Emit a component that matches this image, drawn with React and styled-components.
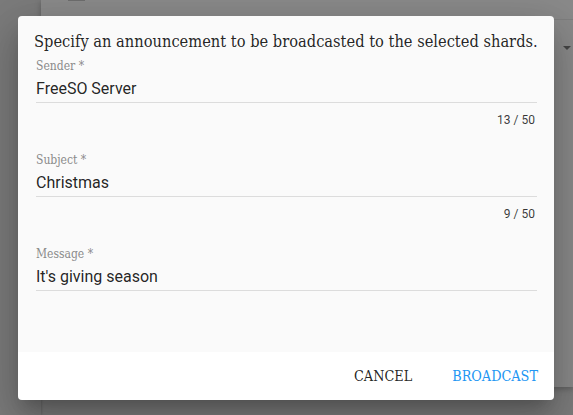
import React from "react";
import styled, { createGlobalStyle } from "styled-components";

const slab = `"DejaVu Serif Condensed", "DejaVu Serif", serif`;
const sans = `Roboto, "Liberation Sans", sans-serif`;

const GlobalStyle = createGlobalStyle`
  html, body { margin: 0; padding: 0; }
  body { background: #7c7c7c; font-family: ${sans}; }
`;

const Page = styled.div`
  position: relative;
  width: 573px;
  height: 415px;
  overflow: hidden;
  display: flex;
  background: #7c7c7c;
`;

const SideStrip = styled.div`
  width: 41px;
  flex: none;
  background: #7b7b7b;
  box-shadow: 1px 0 2px rgba(0, 0, 0, 0.15);
`;

const BackCard = styled.div`
  flex: 1;
  height: 387px;
  background: #8a8a8a;
  box-shadow: 0 2px 6px rgba(0, 0, 0, 0.25);
  display: flex;
  flex-direction: column;
`;

const BackTopRow = styled.div`
  height: 19px;
  border-bottom: 1px solid #7f7f7f;
  display: flex;
  align-items: flex-end;
  padding-left: 27px;
`;

const BackIcon = styled.div`
  width: 17px;
  height: 3px;
  margin-top: -2px;
  align-self: flex-start;
  background: #6e6e6e;
`;

const BackSelectRow = styled.div`
  display: flex;
  justify-content: flex-end;
  padding: 26px 2px 0 0;
`;

const Arrow = styled.div`
  width: 0;
  height: 0;
  border-left: 4px solid transparent;
  border-right: 4px solid transparent;
  border-top: 4px solid #454545;
`;

const Dialog = styled.div`
  position: absolute;
  left: 18px;
  top: 16px;
  width: 536px;
  height: 384px;
  border-radius: 4px;
  overflow: hidden;
  display: flex;
  flex-direction: column;
  box-shadow: 0 11px 15px -7px rgba(0, 0, 0, 0.2), 0 24px 38px 3px rgba(0, 0, 0, 0.14),
    0 9px 46px 8px rgba(0, 0, 0, 0.12);
`;

const Content = styled.div`
  flex: 1;
  background: #fafafa;
  padding: 14px 17px 0 16px;
`;

const Title = styled.p`
  margin: 0 0 5px;
  font-family: ${slab};
  font-size: 16.3px;
  line-height: 24px;
  color: rgba(0, 0, 0, 0.87);
  white-space: nowrap;
`;

const Field = styled.div`
  padding-left: 2px;
  margin-bottom: ${(p) => p.$gap}px;
`;

const Label = styled.div`
  font-family: ${slab};
  font-size: 12px;
  line-height: 14px;
  color: #8a8a8a;
`;

const InputText = styled.div`
  font-family: ${sans};
  font-size: 16px;
  line-height: 19px;
  padding: 6px 0 4px;
  color: rgba(0, 0, 0, 0.87);
  border-bottom: 1px solid #dcdcdc;
`;

const Counter = styled.div`
  font-family: ${sans};
  font-size: 12px;
  line-height: 14px;
  margin-top: 10px;
  padding-right: 2px;
  text-align: right;
  color: rgba(0, 0, 0, 0.78);
`;

const Actions = styled.div`
  height: 48px;
  flex: none;
  background: #fff;
  display: flex;
  align-items: center;
  justify-content: flex-end;
  gap: 24px;
  padding-right: 8px;
`;

const ActionButton = styled.button`
  border: 0;
  background: transparent;
  padding: 6px 8px;
  font-family: ${slab};
  font-size: 14.3px;
  line-height: 20px;
  text-transform: uppercase;
  color: ${(p) => (p.$primary ? "#2196f3" : "rgba(0, 0, 0, 0.87)")};
  cursor: pointer;
`;

const fields = [
  { label: "Sender", value: "FreeSO Server", count: "13 / 50" },
  { label: "Subject", value: "Christmas", count: "9 / 50" },
  { label: "Message", value: "It's giving season" },
];

export default function App() {
  return (
    <>
      <GlobalStyle />
      <Page>
        <SideStrip />
        <BackCard>
          <BackTopRow>
            <BackIcon />
          </BackTopRow>
          <BackSelectRow>
            <Arrow />
          </BackSelectRow>
        </BackCard>
        <Dialog>
          <Content>
            <Title>Specify an announcement to be broadcasted to the selected shards.</Title>
            {fields.map((f) => (
              <Field key={f.label} $gap={f.count ? 26 : 0}>
                <Label>{f.label} *</Label>
                <InputText>{f.value}</InputText>
                {f.count && <Counter>{f.count}</Counter>}
              </Field>
            ))}
          </Content>
          <Actions>
            <ActionButton>Cancel</ActionButton>
            <ActionButton $primary>Broadcast</ActionButton>
          </Actions>
        </Dialog>
      </Page>
    </>
  );
}
